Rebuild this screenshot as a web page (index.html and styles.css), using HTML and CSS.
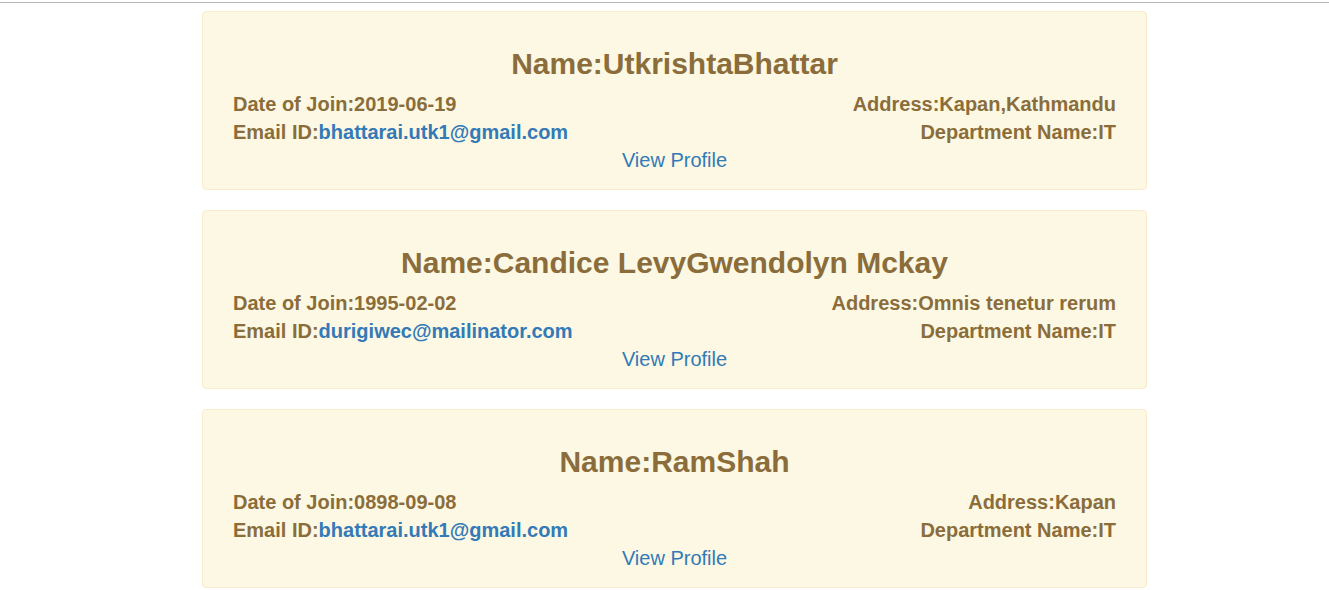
FILE: index.html
```html
<!DOCTYPE html>
<html>
<head>
<meta charset="utf-8">
<link rel="stylesheet" href="styles.css">
</head>
<body>
<div class="topline"></div>
<main class="list">
  <section class="card">
    <h2 class="name">Name:UtkrishtaBhattar</h2>
    <div class="details">
      <div class="left">Date of Join:2019-06-19</div>
      <div class="right">Address:Kapan,Kathmandu</div>
      <div class="left">Email ID:<a class="mail" href="#">bhattarai.utk1@gmail.com</a></div>
      <div class="right">Department Name:IT</div>
    </div>
    <div class="action"><a class="view" href="#">View Profile</a></div>
  </section>
  <section class="card">
    <h2 class="name">Name:Candice LevyGwendolyn Mckay</h2>
    <div class="details">
      <div class="left">Date of Join:1995-02-02</div>
      <div class="right">Address:Omnis tenetur rerum</div>
      <div class="left">Email ID:<a class="mail" href="#">durigiwec@mailinator.com</a></div>
      <div class="right">Department Name:IT</div>
    </div>
    <div class="action"><a class="view" href="#">View Profile</a></div>
  </section>
  <section class="card">
    <h2 class="name">Name:RamShah</h2>
    <div class="details">
      <div class="left">Date of Join:0898-09-08</div>
      <div class="right">Address:Kapan</div>
      <div class="left">Email ID:<a class="mail" href="#">bhattarai.utk1@gmail.com</a></div>
      <div class="right">Department Name:IT</div>
    </div>
    <div class="action"><a class="view" href="#">View Profile</a></div>
  </section>
</main>
</body>
</html>
```
FILE: styles.css
```css
html, body {
  margin: 0;
  padding: 0;
  background: #fff;
  font-family: "Liberation Sans", Arial, sans-serif;
}
.topline {
  margin-top: 2px;
  height: 1px;
  background: #b7b7b7;
}
.list {
  width: 945px;
  margin: 8px 0 0 202px;
  display: flex;
  flex-direction: column;
  gap: 20px;
}
.card {
  box-sizing: border-box;
  background: #fcf8e3;
  border: 1px solid #faebcc;
  border-radius: 4px;
  padding: 15px 30px;
  color: #8a6d3b;
}
.name {
  margin: 20px 0 10px;
  font-size: 30px;
  line-height: 33px;
  font-weight: bold;
  text-align: center;
}
.details {
  display: grid;
  grid-template-columns: 1fr 1fr;
  font-size: 20px;
  line-height: 28px;
  font-weight: bold;
}
.right {
  text-align: right;
}
.mail {
  color: #337ab7;
  text-decoration: none;
}
.action {
  text-align: center;
  font-size: 20px;
  line-height: 28px;
}
.view {
  color: #337ab7;
  text-decoration: none;
}
```
